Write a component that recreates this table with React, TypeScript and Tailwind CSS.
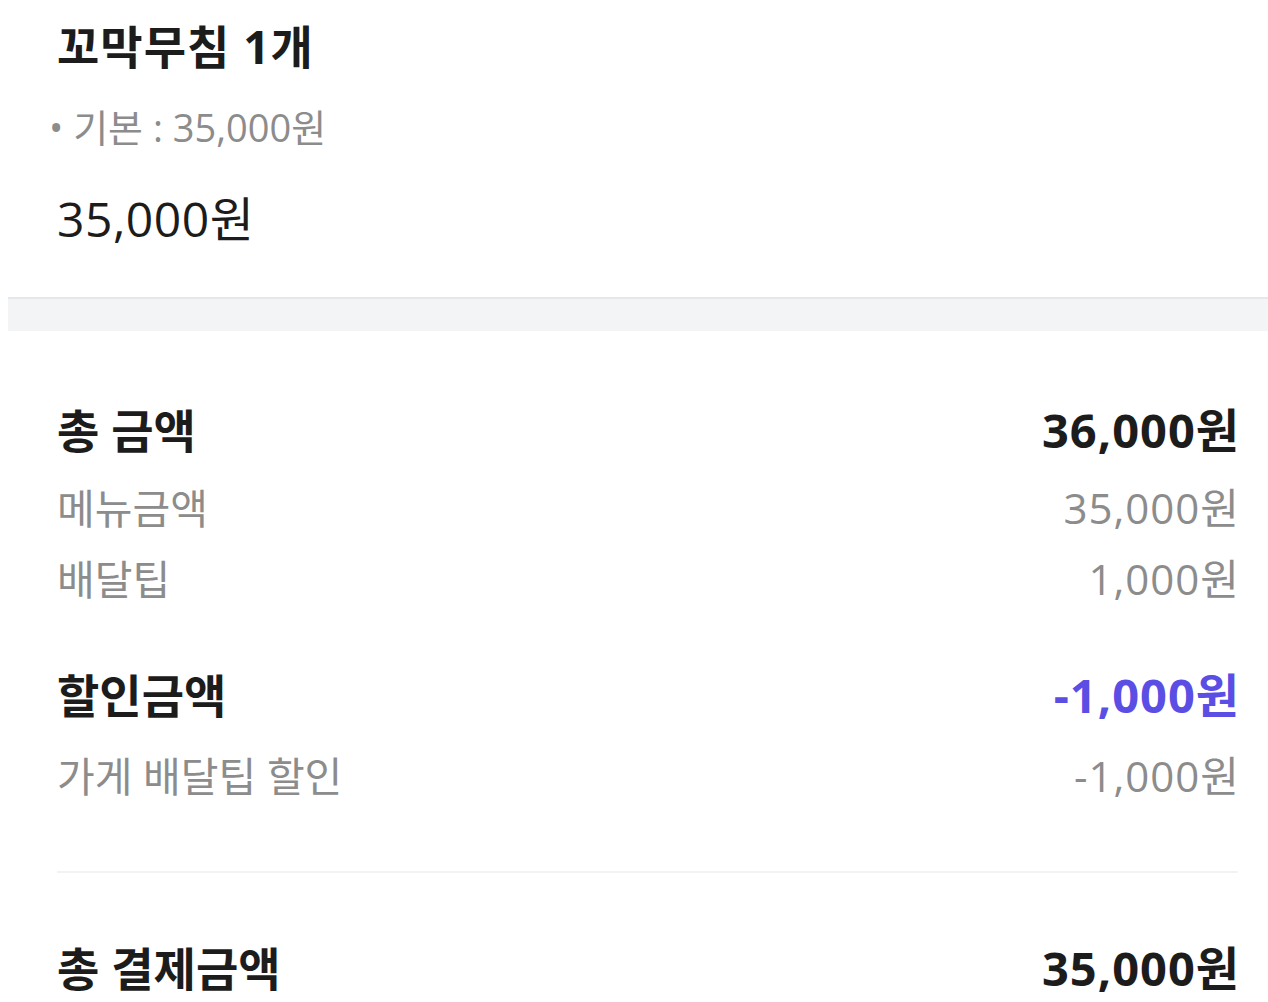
import React from "react";

const font = { fontFamily: '"Open Sans", "Noto Sans CJK KR", sans-serif' };

const BOLD = "text-[46px] font-bold text-[#1c1c1c] leading-none";
const BOLD_R = "text-[47px] font-bold text-[#1c1c1c] leading-none tracking-[1px]";
const GRAY = "text-[41px] text-[#8c8c8c] leading-none";
const GRAY_R = "text-[42px] text-[#8c8c8c] leading-none tracking-[1px]";

function Row({
  left,
  right,
  bold,
  rightClass,
  mt,
}: {
  left: string;
  right: string;
  bold?: boolean;
  rightClass?: string;
  mt: string;
}) {
  return (
    <div className={`flex h-[60px] items-center justify-between ${mt}`}>
      <span className={bold ? BOLD : GRAY}>{left}</span>
      <span className={rightClass ?? (bold ? BOLD_R : GRAY_R)}>{right}</span>
    </div>
  );
}

export default function App() {
  return (
    <div className="w-[1268px] h-[1002px] overflow-hidden bg-white" style={font}>
      <div className="pl-[57px] pr-[28px]">
        <div className="flex h-[92px] items-center">
          <span className="text-[46px] font-bold text-[#1c1c1c] leading-none tracking-[1px]">꼬막무침 1개</span>
        </div>
        <div className="flex h-[70px] items-center -ml-[8px]">
          <span className="text-[38px] text-[#8c8c8c] leading-none">• 기본 : 35,000원</span>
        </div>
        <div className="flex h-[114px] items-center">
          <span className="text-[48px] text-[#1c1c1c] leading-none tracking-[0.5px]">35,000원</span>
        </div>
      </div>
      <div className="mt-[21px] ml-[8px] h-[34px] border-t-2 border-[#e6e7ea] bg-[#f3f4f6]" />
      <div className="pl-[57px] pr-[28px]">
        <Row left="총 금액" right="36,000원" bold mt="mt-[69px]" />
        <Row left="메뉴금액" right="35,000원" mt="mt-[18px]" />
        <Row left="배달팁" right="1,000원" mt="mt-[11px]" />
        <Row
          left="할인금액"
          right="-1,000원"
          bold
          mt="mt-[56px]"
          rightClass="text-[47px] font-bold text-[#5b4ee4] leading-none tracking-[1px]"
        />
        <Row left="가게 배달팁 할인" right="-1,000원" mt="mt-[21px]" />
        <div className="mt-[65px] h-[2px] mr-[2px] bg-[#f2f3f4]" />
        <Row left="총 결제금액" right="35,000원" bold mt="mt-[65px]" />
      </div>
    </div>
  );
}
